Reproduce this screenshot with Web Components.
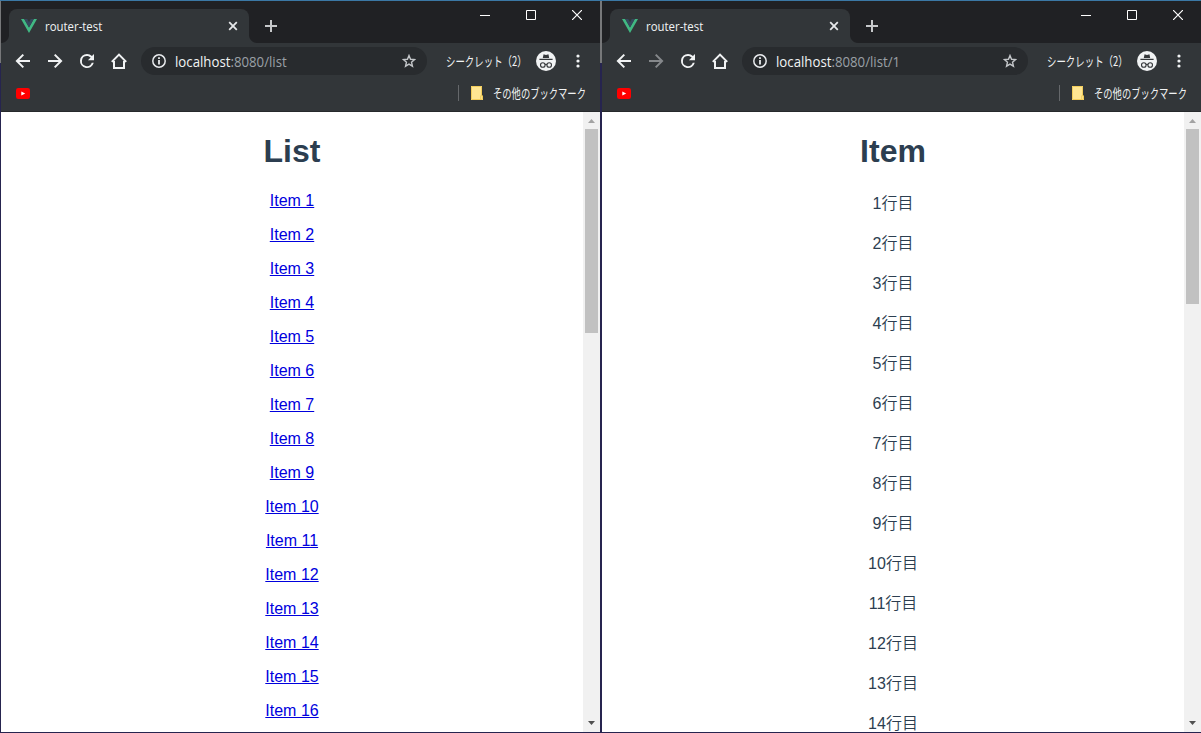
<!DOCTYPE html>
<html lang="ja">
<head>
<meta charset="utf-8">
<title>router-test</title>
<style>
html,body{margin:0;height:733px;overflow:hidden;background:#fff}
body{font-family:"Liberation Sans","Noto Sans CJK JP",sans-serif}
</style>
</head>
<body>
<split-desktop>
  <browser-window path="/list" heading="List" kind="list" thumb="204" forward></browser-window>
  <browser-window path="/list/1" heading="Item" kind="item" thumb="175"></browser-window>
</split-desktop>
<script>
class SplitDesktop extends HTMLElement{
  constructor(){super();this.attachShadow({mode:"open"}).innerHTML=`
<style>:host{display:flex;width:1201px;height:733px;overflow:hidden}</style><slot></slot>`;}
}

/* Text condensed horizontally to the metrics of the Windows UI fonts */
class UiText extends HTMLElement{
  constructor(){super();this.attachShadow({mode:"open"}).innerHTML=`
<style>:host{display:block;white-space:nowrap;flex:none}
span{display:inline-block;transform-origin:0 50%;transform:scaleX(var(--sx,1))}</style><span><slot></slot></span>`;}
}

const ICONS={
 vue:[16,14,`<path fill="#41b883" d="M0 0h3.2L8 8.4 12.8 0H16L8 14z"/><path fill="#35495e" d="M3.2 0h3L8 3.2 9.8 0h3L8 8.4z"/>`],
 close:[10,10,`<path stroke="#e6e8ea" stroke-width="1.8" d="M1.2 1.2l7.6 7.6M8.8 1.2L1.2 8.8"/>`],
 plus:[12,12,`<path stroke="#c6c8ca" stroke-width="2" d="M6 0v12M0 6h12"/>`],
 min:[10,10,`<path fill="#fff" d="M0 5h10v1H0z"/>`],
 max:[10,10,`<path stroke="#fff" fill="none" d="M.5 .5h9v9h-9z"/>`],
 x:[10,10,`<path stroke="#fff" stroke-width="1.2" d="M0 0l10 10M10 0L0 10"/>`],
 back:[16,16,`<path stroke="currentColor" stroke-width="2" fill="none" d="M15 8H2.4M8.3 1.6L1.9 8l6.4 6.4"/>`],
 fwd:[16,16,`<path stroke="currentColor" stroke-width="2" fill="none" d="M1 8h12.6M7.7 1.6L14.1 8l-6.4 6.4"/>`],
 reload:[20,20,`<path transform="translate(-.5 -.5) scale(.875)" fill="#f1f3f4" d="M17.65 6.35A7.96 7.96 0 0 0 12 4a8 8 0 1 0 7.73 10h-2.3A5.8 5.8 0 1 1 12 6.2c1.6 0 3.1.7 4.2 1.75L13 11h7V4z"/>`],
 home:[16,16,`<path stroke="#f1f3f4" stroke-width="2" fill="none" d="M.8 8.9L8 1.6l7.2 7.3M3 8v7h10V8"/>`],
 info:[14,14,`<circle cx="7" cy="7" r="6.2" stroke="#e8eaed" stroke-width="1.5" fill="none"/><path fill="#e8eaed" d="M6.1 6h1.8v4.6H6.1zM6.1 3.3h1.8v1.7H6.1z"/>`],
 star:[14,14,`<path stroke="#c3c6c9" stroke-width="1.4" fill="none" d="M7 1.5l1.55 3.75 4.05.35-3.08 2.65.93 3.95L7 10.1l-3.45 2.1.93-3.95L1.4 5.6l4.05-.35z"/>`],
 spy:[20,20,`<circle cx="10" cy="10" r="10" fill="#f1f3f4"/><path fill="#35383b" d="M6.8 7L7.5 3.6Q7.7 3.2 8.2 3.4L10 3.9l1.8-.5q.5-.2.7.2L13.2 7zM3.4 7.8h13.2v1.3H3.4z"/><g stroke="#35383b" stroke-width="1.1" fill="none"><circle cx="6.8" cy="14" r="2.3"/><circle cx="13.2" cy="14" r="2.3"/><path d="M9 13.7q1-.8 2 0"/></g>`],
 dots:[4,14,`<g fill="#f1f3f4"><circle cx="2" cy="2" r="1.6"/><circle cx="2" cy="7" r="1.6"/><circle cx="2" cy="12" r="1.6"/></g>`],
 youtube:[14,11,`<rect width="14" height="11" rx="2.3" fill="#f00"/><path fill="#fff" d="M5.3 3.4L9.2 5.5 5.3 7.6z"/>`],
 folder:[12,14,`<path fill="#ffe692" d="M0 0h11v10h1v4H0z"/><path fill="none" stroke="#f2cd5b" d="M.5 13.5V.5h10v9.2M.5 13.5h11v-3.8h-1.8v3.8"/>`],
 up:[7,4,`<path fill="#a3a3a3" d="M0 4L3.5 0 7 4z"/>`],
 down:[7,4,`<path fill="#505050" d="M0 0h7L3.5 4z"/>`]
};
class UiIcon extends HTMLElement{
  connectedCallback(){
    const [w,h,body]=ICONS[this.getAttribute("name")];
    (this.shadowRoot||this.attachShadow({mode:"open"})).innerHTML=`
<style>:host{display:block;flex:none;width:${w}px;height:${h}px}svg{display:block}</style>
<svg width="${w}" height="${h}" viewBox="0 0 ${w} ${h}">${body}</svg>`;}
}

class TabStrip extends HTMLElement{
  constructor(){super();this.attachShadow({mode:"open"}).innerHTML=`
<style>
:host{display:flex;height:42px;background:#202124;box-sizing:border-box;padding:8px 0 0 8px;font:12px "Open Sans","Noto Sans",sans-serif;color:#f1f3f4}
.tab{position:relative;display:flex;align-items:center;box-sizing:border-box;width:240px;height:34px;padding:0 11px 0 12px;background:#323639;border-radius:8px 8px 0 0}
.tab::before,.tab::after{content:"";position:absolute;bottom:0;width:8px;height:8px}
.tab::before{left:-8px;background:radial-gradient(circle at 0 0,#202124 7.5px,#323639 8.5px)}
.tab::after{right:-8px;background:radial-gradient(circle at 100% 0,#202124 7.5px,#323639 8.5px)}
ui-text{margin-left:8px;flex:1;--sx:.95}
.plus{margin:11px 0 0 16px}
.ctl{display:flex;gap:36px;margin:1px 18px 0 auto}
</style>
<div class="tab"><ui-icon name="vue"></ui-icon><ui-text>router-test</ui-text><ui-icon name="close"></ui-icon></div>
<ui-icon class="plus" name="plus"></ui-icon>
<div class="ctl"><ui-icon name="min"></ui-icon><ui-icon name="max"></ui-icon><ui-icon name="x"></ui-icon></div>`;}
}

class NavBar extends HTMLElement{
  connectedCallback(){
    const fwd=this.hasAttribute("forward")?"#f1f3f4":"#85888b";
    (this.shadowRoot||this.attachShadow({mode:"open"})).innerHTML=`
<style>
:host{display:flex;align-items:center;height:36px;background:#323639;color:#f1f3f4;padding-left:14px;box-sizing:border-box}
.nav{display:grid;grid-template-columns:16px 16px 16px 16px;column-gap:16px;width:112px;justify-items:center;align-items:center;margin-right:14px}
.fwd{color:${fwd}}
.box{display:flex;align-items:center;width:286px;height:28px;box-sizing:border-box;padding:0 11px;border-radius:14px;background:#282b2e;font:14px "Open Sans","Noto Sans",sans-serif}
.box ui-text{flex:1;margin-left:9px;--sx:.945}
.path{color:#9aa0a6}
.mode{width:80px;margin-left:19px;padding-bottom:1px;font:13px/18px "Noto Sans CJK JP",sans-serif;--sx:.725}
.spy{margin-left:10px}.dots{margin-left:20px}
</style>
<div class="nav"><ui-icon name="back"></ui-icon><ui-icon class="fwd" name="fwd"></ui-icon><ui-icon name="reload"></ui-icon><ui-icon name="home"></ui-icon></div>
<div class="box"><ui-icon name="info"></ui-icon><ui-text>localhost<span class="path">:8080${this.getAttribute("path")}</span></ui-text><ui-icon name="star"></ui-icon></div>
<ui-text class="mode">シークレット（2）</ui-text>
<ui-icon class="spy" name="spy"></ui-icon><ui-icon class="dots" name="dots"></ui-icon>`;}
}

class BookmarkBar extends HTMLElement{
  constructor(){super();this.attachShadow({mode:"open"}).innerHTML=`
<style>
:host{display:flex;align-items:center;height:33px;box-sizing:border-box;padding:0 14px 4px 15px;background:#323639;border-bottom:1px solid #26292b;color:#f1f3f4}
i{width:1px;height:16px;background:#65686b;margin:0 12px 0 auto}
ui-text{width:93px;margin-left:10px;padding-bottom:1px;font:13px/18px "Noto Sans CJK JP",sans-serif;--sx:.715}
</style>
<ui-icon name="youtube"></ui-icon><i></i><ui-icon name="folder"></ui-icon><ui-text>その他のブックマーク</ui-text>`;}
}

class ScrollTrack extends HTMLElement{
  connectedCallback(){
    (this.shadowRoot||this.attachShadow({mode:"open"})).innerHTML=`
<style>
:host{display:flex;flex-direction:column;align-items:center;width:17px;flex:none;background:#f1f1f1}
.up{margin:7px 0 6px}.down{margin:auto 0 7px}
div{width:13px;height:${this.getAttribute("thumb")}px;background:#c1c1c1}
</style>
<ui-icon class="up" name="up"></ui-icon><div></div><ui-icon class="down" name="down"></ui-icon>`;}
}

class RouteView extends HTMLElement{
  connectedCallback(){
    const list=this.getAttribute("kind")==="list";
    const rows=Array.from({length:list?16:14},(_,i)=>list?`<p><a href="#">Item ${i+1}</a></p>`:`<p>${i+1}行目</p>`).join("");
    (this.shadowRoot||this.attachShadow({mode:"open"})).innerHTML=`
<style>
:host{display:block;flex:1;overflow:hidden;background:#fff;color:#2c3e50;text-align:center;font:350 16px "Liberation Sans","Noto Sans CJK JP",sans-serif}
h1{font-size:32px;font-weight:700;line-height:37px;margin:21px 0 22px}
p{margin:0 0 16px;line-height:${list?18:24}px}
a{color:#0000dd}
</style><h1>${this.getAttribute("heading")}</h1>${rows}`;}
}

class BrowserWindow extends HTMLElement{
  connectedCallback(){
    const a=n=>this.getAttribute(n);
    (this.shadowRoot||this.attachShadow({mode:"open"})).innerHTML=`
<style>
:host{display:grid;grid-template:1px 42px 36px 33px 1fr 1px / 1px 599px 1px;flex:none;width:601px;height:733px;
 background:linear-gradient(#77787a 0 63px,#26244f 63px)}
.top{grid-area:1/1/2/4;background:#3b78a5}
tab-strip,nav-bar,bookmark-bar,.view{grid-column:2}
.view{display:flex;min-height:0;overflow:hidden}
</style>
<div class="top"></div>
<tab-strip></tab-strip>
<nav-bar path="${a("path")}" ${this.hasAttribute("forward")?"forward":""}></nav-bar>
<bookmark-bar></bookmark-bar>
<div class="view"><route-view kind="${a("kind")}" heading="${a("heading")}"></route-view><scroll-track thumb="${a("thumb")}"></scroll-track></div>`;}
}
customElements.define("split-desktop",SplitDesktop);
customElements.define("ui-text",UiText);
customElements.define("ui-icon",UiIcon);
customElements.define("tab-strip",TabStrip);
customElements.define("nav-bar",NavBar);
customElements.define("bookmark-bar",BookmarkBar);
customElements.define("scroll-track",ScrollTrack);
customElements.define("route-view",RouteView);
customElements.define("browser-window",BrowserWindow);
</script>
</body>
</html>
